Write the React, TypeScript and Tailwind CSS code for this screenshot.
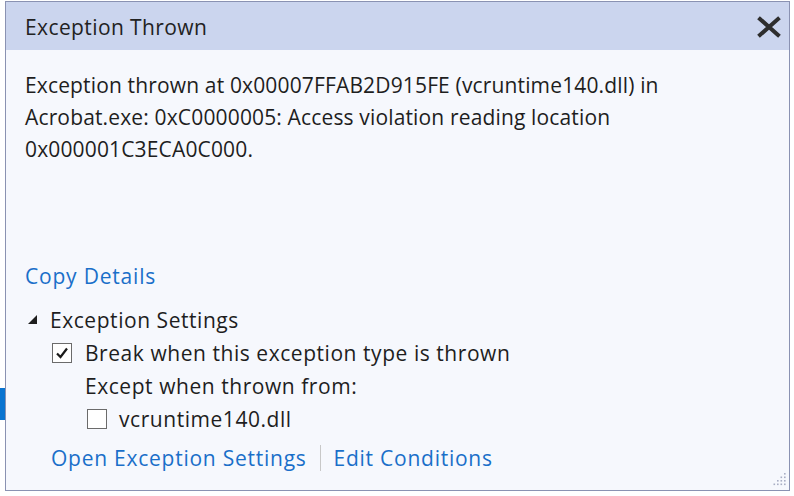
import React from "react";

const font = { fontFamily: '"Open Sans", "Noto Sans", sans-serif' };

function Check({ checked }: { checked: boolean }) {
  return (
    <div className="w-[20px] h-[20px] border border-[#6b6b6b] bg-white flex items-center justify-center shrink-0">
      {checked && (
        <svg width="14" height="14" viewBox="0 0 14 14">
          <path d="M2 7.5 L5.5 11 L12 2.5" fill="none" stroke="#1a1a1a" strokeWidth="2.2" />
        </svg>
      )}
    </div>
  );
}

export default function App() {
  return (
    <div className="w-[794px] h-[496px] bg-white relative overflow-hidden" style={font}>
      <div className="absolute left-0 top-[388px] w-[5px] h-[32px] bg-[#0a74d0]" />
      <div className="ml-[5px] mt-[1px] w-[785px] h-[490px] border border-[#8a92b2] flex flex-col bg-[#f6f8fd] relative">
        <div className="h-[48px] bg-[#cbd5ee] flex items-center justify-between pl-[19px] pr-[7px] shrink-0">
          <span className="text-[21px] tracking-[0.4px] text-[#222] pt-[3px]">Exception Thrown</span>
          <svg width="26" height="22" viewBox="0 0 26 22" className="mt-[2px]">
            <path d="M4 3 L22 19 M22 3 L4 19" stroke="#2e2e2e" strokeWidth="4" strokeLinecap="square" />
          </svg>
        </div>
        <div className="flex flex-col pl-[19px] pt-[19px] text-[21px] tracking-[0.55px] text-[#1e1e1e]">
          <div className="leading-[32px] whitespace-nowrap tracking-[0.15px]">
            Exception thrown at 0x00007FFAB2D915FE (vcruntime140.dll) in
            <br />
            Acrobat.exe: 0xC0000005: Access violation reading location
            <br />
            0x000001C3ECA0C000.
          </div>
          <div className="mt-[95px] leading-[32px] text-[#1a6fc9] tracking-[0.8px]">Copy Details</div>
          <div className="mt-[12px] flex items-center leading-[32px]">
            <svg width="10" height="10" viewBox="0 0 10 10" className="ml-[3px] mr-[12px]">
              <polygon points="9,0 9,9 0,9" fill="#1e1e1e" />
            </svg>
            <span>Exception Settings</span>
          </div>
          <div className="flex items-center leading-[32px] ml-[27px] mt-[1px]">
            <Check checked />
            <span className="ml-[13px]">Break when this exception type is thrown</span>
          </div>
          <div className="leading-[32px] ml-[60px] mt-[1px]">Except when thrown from:</div>
          <div className="flex items-center leading-[32px] ml-[62px] mt-[1px]">
            <Check checked={false} />
            <span className="ml-[12px]">vcruntime140.dll</span>
          </div>
          <div className="flex items-center leading-[32px] ml-[26px] mt-[7px] text-[#1a6fc9] tracking-[0.75px]">
            <span>Open Exception Settings</span>
            <div className="w-[1px] h-[26px] bg-[#c8c8c8] mx-[13px]" />
            <span>Edit Conditions</span>
          </div>
        </div>
        <svg width="14" height="14" viewBox="0 0 14 14" className="absolute right-[3px] bottom-[3px]">
          {[
            [12, 0], [12, 3.5], [8.5, 3.5], [12, 7], [8.5, 7], [5, 7], [12, 10.5], [8.5, 10.5], [5, 10.5], [1.5, 10.5],
          ].map(([x, y], i) => (
            <rect key={i} x={x} y={y} width="1.6" height="1.6" fill="#a8aec4" />
          ))}
        </svg>
      </div>
    </div>
  );
}
